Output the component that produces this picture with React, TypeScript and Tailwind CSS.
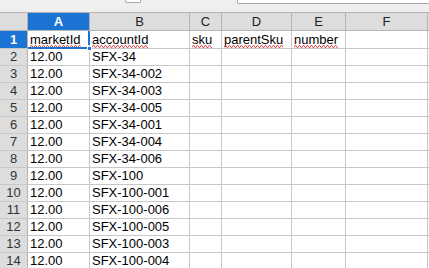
import React from 'react';

// Ancho de cada columna (incluye el borde derecho)
const columnas = [
  { letra: 'A', ancho: 'w-[62px]' },
  { letra: 'B', ancho: 'w-[100px]' },
  { letra: 'C', ancho: 'w-[32px]' },
  { letra: 'D', ancho: 'w-[70px]' },
  { letra: 'E', ancho: 'w-[54px]' },
  { letra: 'F', ancho: 'w-[82px]' },
];

const encabezados = ['marketId', 'accountId', 'sku', 'parentSku', 'number'];

const cuentas = [
  'SFX-34',
  'SFX-34-002',
  'SFX-34-003',
  'SFX-34-005',
  'SFX-34-001',
  'SFX-34-004',
  'SFX-34-006',
  'SFX-100',
  'SFX-100-001',
  'SFX-100-006',
  'SFX-100-005',
  'SFX-100-003',
  'SFX-100-004',
];

const Celda = ({ ancho, children }: { ancho: string; children?: React.ReactNode }) => (
  <div className={`${ancho} h-full shrink-0 border-r border-[#c8c8c8] pl-[2px] flex items-center whitespace-nowrap`}>
    {children}
  </div>
);

// Texto con la línea ondulada roja del corrector ortográfico
const Subrayado = ({ texto, id }: { texto: string; id: string }) => (
  <span className="relative inline-block leading-[15px]">
    {texto}
    <svg className="absolute left-0 top-[13px] w-full h-[3px]" aria-hidden="true">
      <defs>
        <pattern id={id} width="4" height="3" patternUnits="userSpaceOnUse">
          <path d="M0 2.5 L1 0.5 L2 0.5 L3 2.5 L4 2.5" fill="none" stroke="#e45050" strokeWidth="1" />
        </pattern>
      </defs>
      <rect width="100%" height="3" fill={`url(#${id})`} />
    </svg>
  </span>
);

export default function App() {
  return (
    <div className="w-[429px] h-[268px] overflow-hidden bg-white text-[13px] text-black" style={{ fontFamily: '"Liberation Sans", Arial, sans-serif' }}>
      {/* Barra superior con la parte baja de la barra de fórmulas */}
      <div className="h-[12px] bg-[#efefef] flex items-start">
        <div className="ml-[125px] w-[16px] h-[3px] bg-white border border-t-0 border-[#a8a8a8] rounded-b-[2px]" />
        <div className="ml-[96px] flex-1 h-[4px] bg-white border-l border-b border-[#a8a8a8] rounded-bl-[2px]" />
      </div>

      {/* Encabezado de columnas */}
      <div className="h-[19px] flex bg-[#dddddd] border-y border-[#b4b4b4]">
        <div className="w-[28px] h-full shrink-0 border-r border-[#b4b4b4]" />
        {columnas.map((c) => (
          <div
            key={c.letra}
            className={`${c.ancho} h-full shrink-0 border-r border-[#b4b4b4] flex items-center justify-center ${
              c.letra === 'A' ? 'bg-[#1b73d3] text-white font-bold' : 'text-[#222]'
            }`}
          >
            {c.letra}
          </div>
        ))}
      </div>

      {/* Fila 1: encabezados con subrayado ortográfico */}
      <div className="h-[18px] flex border-b border-[#c8c8c8]">
        <div className="w-[28px] h-full shrink-0 bg-[#1b73d3] text-white font-bold border-r border-[#b4b4b4] flex items-center justify-center">1</div>
        <div className="relative w-[62px] h-full shrink-0 border-r border-[#c8c8c8] pl-[2px] flex items-center">
          <Subrayado texto={encabezados[0]} id="onda0" />
          <div className="absolute left-0 right-[-1px] bottom-[-1px] h-[2px] bg-[#1b73d3]" />
          <div className="absolute right-[-1px] top-0 bottom-[3px] w-[2px] bg-[#1b73d3]" />
          <div className="absolute right-[-3px] bottom-[-3px] w-[5px] h-[5px] bg-[#1b73d3] border border-white" />
        </div>
        <Celda ancho="w-[100px]"><Subrayado texto={encabezados[1]} id="onda1" /></Celda>
        <Celda ancho="w-[32px]"><Subrayado texto={encabezados[2]} id="onda2" /></Celda>
        <Celda ancho="w-[70px]"><Subrayado texto={encabezados[3]} id="onda3" /></Celda>
        <Celda ancho="w-[54px]"><Subrayado texto={encabezados[4]} id="onda4" /></Celda>
        <Celda ancho="w-[82px]" />
      </div>

      {/* Filas de datos */}
      {cuentas.map((cuenta, i) => (
        <div key={cuenta} className="h-[17px] flex border-b border-[#c8c8c8]">
          <div className="w-[28px] h-full shrink-0 bg-[#dddddd] text-[#333] border-r border-[#b4b4b4] flex items-center justify-center">
            {i + 2}
          </div>
          <Celda ancho="w-[62px]">12.00</Celda>
          <Celda ancho="w-[100px]">{cuenta}</Celda>
          <Celda ancho="w-[32px]" />
          <Celda ancho="w-[70px]" />
          <Celda ancho="w-[54px]" />
          <Celda ancho="w-[82px]" />
        </div>
      ))}
    </div>
  );
}
